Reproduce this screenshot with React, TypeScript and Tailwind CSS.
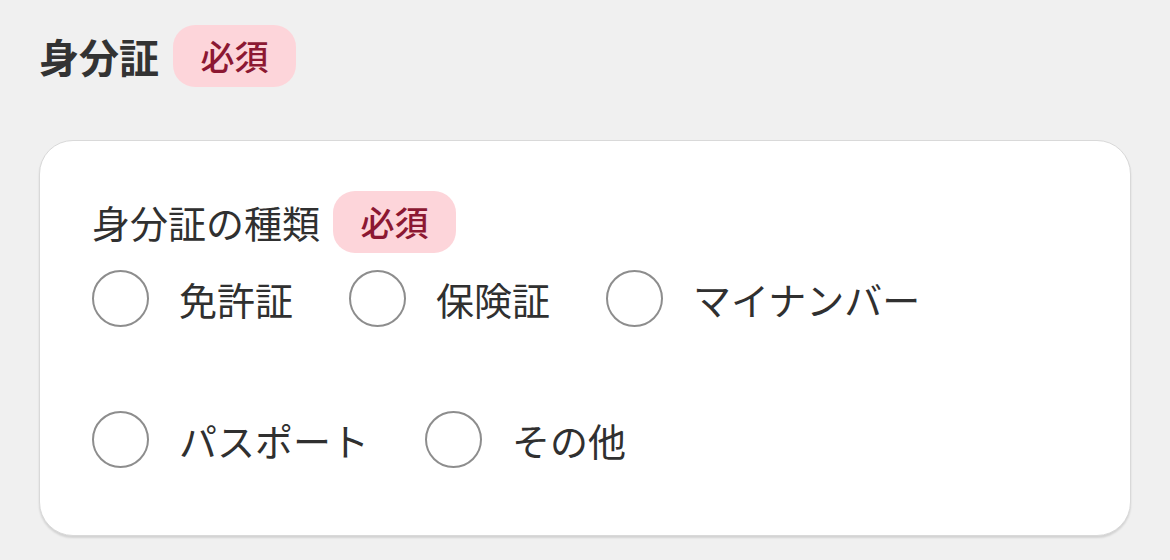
const font = { fontFamily: '"Noto Sans CJK JP", "Noto Sans", sans-serif' };

function Required() {
  return (
    <span className="inline-flex h-[62px] w-[123px] items-center justify-center rounded-[22px] bg-[#fdd5da] text-[34px] font-medium leading-none text-[#8c1832]">
      必須
    </span>
  );
}

function Radio({ label }: { label: string }) {
  return (
    <label className="flex items-center gap-[30px]">
      <span className="h-[57px] w-[57px] shrink-0 rounded-full border-2 border-[#8d8d8d] bg-white" />
      <span className="text-[38px] leading-none text-[#303030]">{label}</span>
    </label>
  );
}

const options = ["免許証", "保険証", "マイナンバー", "パスポート", "その他"];

export default function App() {
  return (
    <div className="min-h-[560px] bg-[#f0f0f0] pl-[39px] pr-[39px] pt-[25px]" style={font}>
      <div className="flex items-center gap-[14px]">
        <h2 className="text-[40px] font-bold leading-none text-[#333333]">身分証</h2>
        <Required />
      </div>
      <div className="mt-[53px] rounded-[34px] border border-[#d9d9d9] bg-white pb-[67px] pl-[52px] pr-[52px] pt-[50px] shadow-[0_2px_2px_rgba(0,0,0,0.12)]">
        <div className="flex items-center gap-[13px]">
          <span className="text-[38px] leading-none text-[#303030]">身分証の種類</span>
          <Required />
        </div>
        <div className="mt-[17px] flex flex-wrap gap-x-[56px] gap-y-[84px]">
          {options.map((o) => (
            <Radio key={o} label={o} />
          ))}
        </div>
      </div>
    </div>
  );
}
